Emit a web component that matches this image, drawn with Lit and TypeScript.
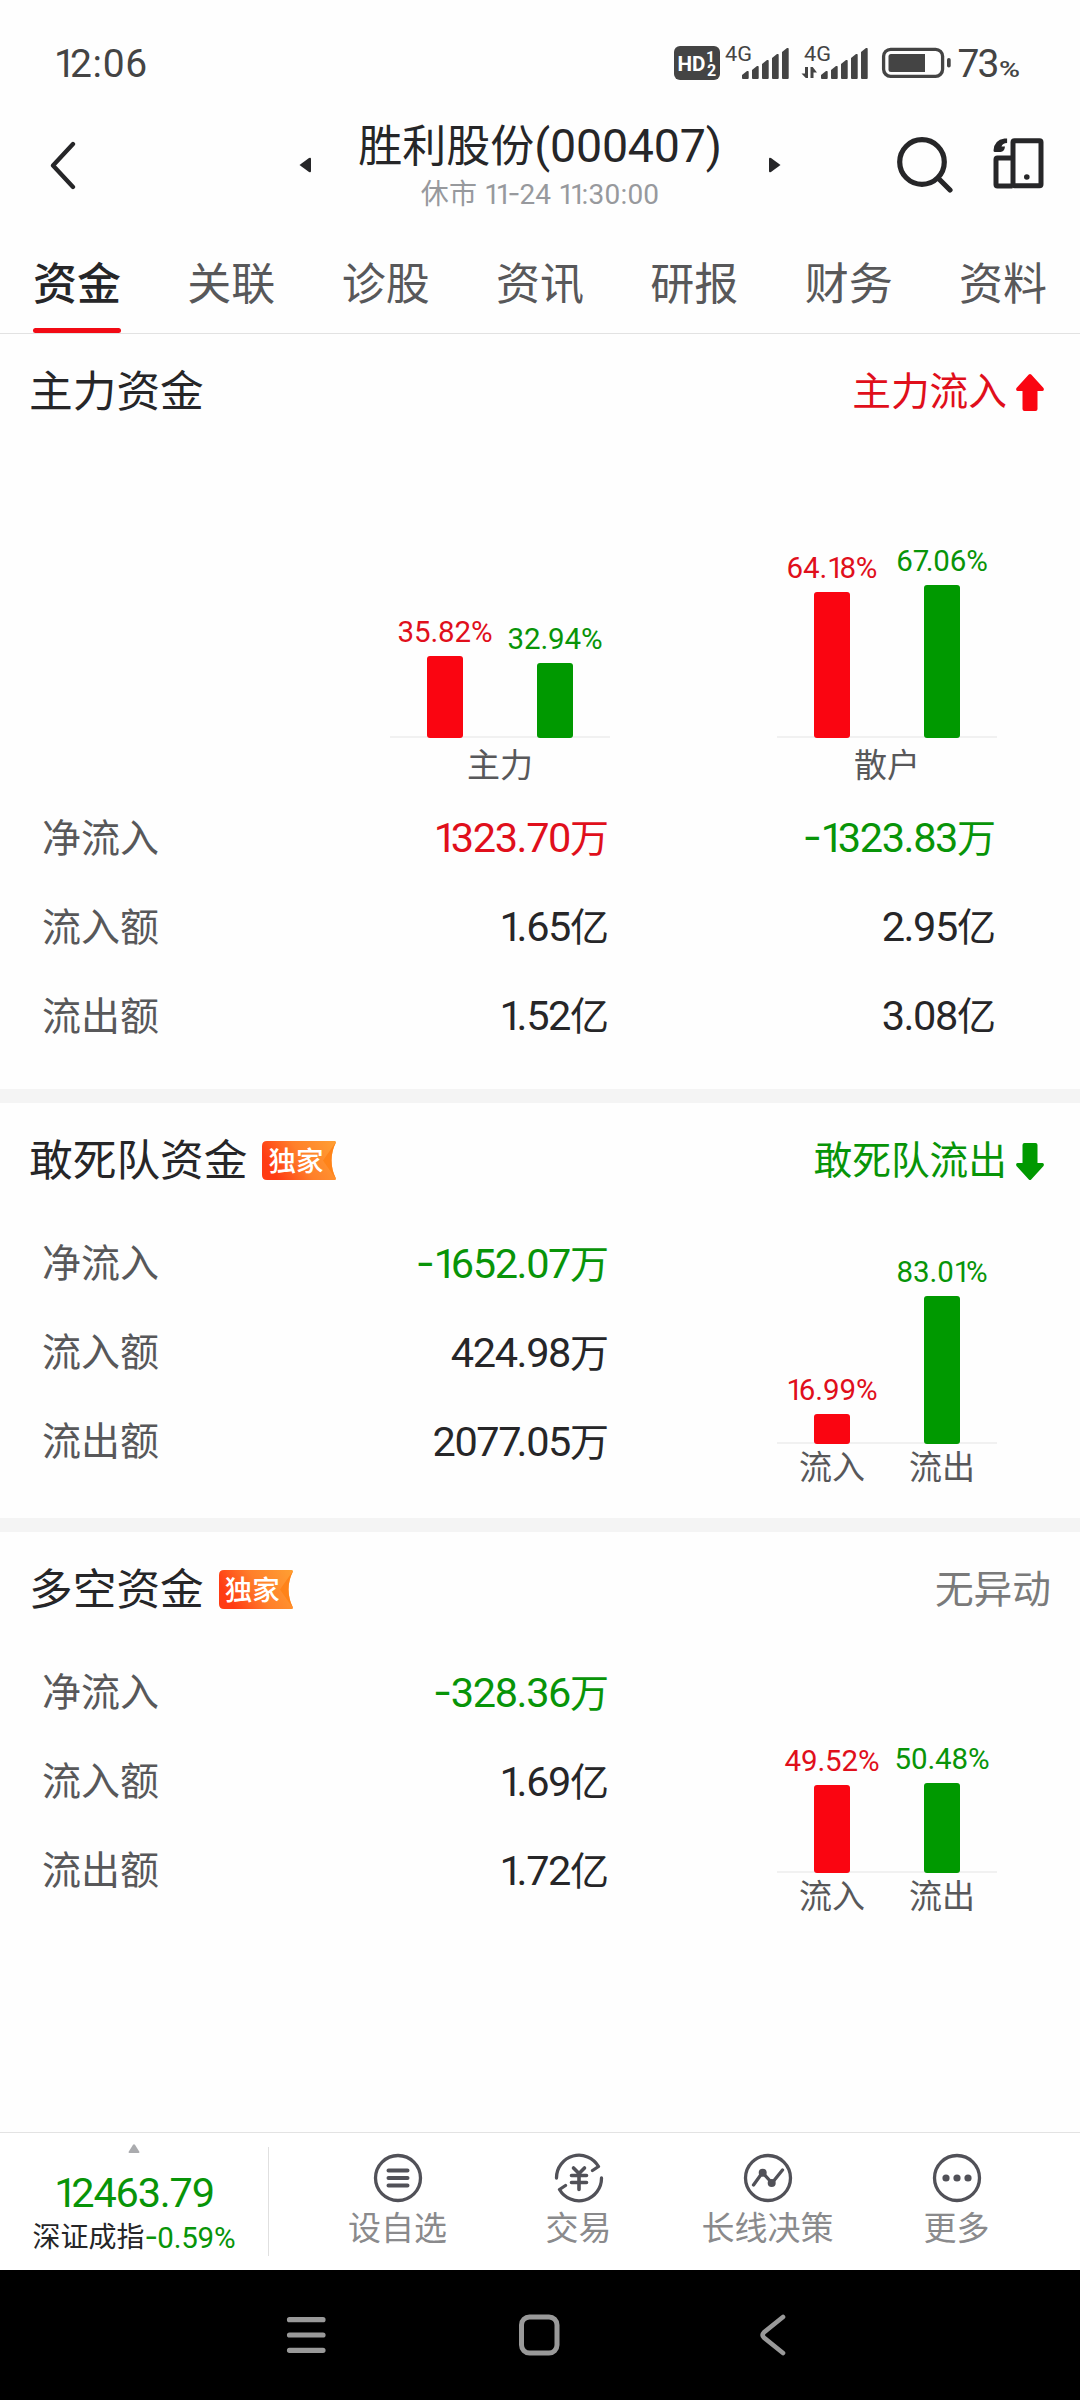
import { LitElement, html, svg, css, nothing } from "lit";
import { customElement, property } from "lit/decorators.js";

type Tone = "up" | "down" | "plain";
interface Bar { value: number; tone: Tone; label?: string; }
interface Amount { num: string; unit: string; tone: Tone; }
interface Row { label: string; amounts: Amount[]; }

const base = css`
  :host { display: block; font-family: Roboto, "Noto Sans CJK SC", sans-serif; }
  * { box-sizing: border-box; }
  svg { display: block; flex: none; }
  .one { letter-spacing: -0.150em; }
  .seven { letter-spacing: -0.120em; }
  .dash { font-family: Inter, sans-serif; letter-spacing: -0.030em; line-height: 0; vertical-align: 0.030em; }
  .up { color: #e00f1b; }
  .down { color: #089408; }
  .plain { color: #262628; }
`;

const classOf: Record<string, string> = { "1": "one", "7": "seven", "-": "dash" };

const numeral = (s: string) =>
  s.split(/(1|-|7(?=\.))/).filter((p) => p).map((p) => {
    const c = p.length === 1 && (p !== "7" || s.includes("7.")) ? classOf[p] : undefined;
    return c ? html`<span class=${c}>${p}</span>` : p;
  });

@customElement("status-bar")
class StatusBar extends LitElement {
  static styles = [base, css`
    .bar { display: flex; justify-content: space-between; align-items: center; height: 126px; padding: 0 56px 0 54px; color: #444; }
    .time { font-size: 39px; line-height: 46px; letter-spacing: 0.600px; padding-top: 2px; }
    .t { font-family: Roboto, sans-serif; fill: #444; }
    .w { fill: #fff; font-weight: 700; }
    .m { font-weight: 500; }
  `];
  signal(x: number) {
    const tops = [71, 66, 60, 54, 48];
    return tops.map((t, i) => {
      const l = x + i * 10;
      return svg`<path fill="#444" d="M${l} ${t + 4}L${l + 5} ${t}H${l + 6}Q${l + 6.7} ${t} ${l + 6.7} ${t + 1}V78Q${l + 6.7} 79 ${l + 5.7} 79H${l + 1}Q${l} 79 ${l} 78Z"/>`;
    });
  }
  render() {
    return html`<div class="bar">
      <span class="time">${numeral("12:06")}</span>
      <svg width="350" height="126" viewBox="674 0 350 126">
        <rect x="674" y="46" width="46" height="34" rx="6" fill="#444"/>
        <text class="t w" x="677.5" y="70.500" font-size="20" textLength="28" lengthAdjust="spacingAndGlyphs">HD</text>
        <text class="t w" x="706" y="61.5" font-size="15.5">1</text>
        <text class="t w" x="707" y="76" font-size="16">2</text>
        <text class="t" x="725" y="61" font-size="20" textLength="27" lengthAdjust="spacingAndGlyphs">4G</text>
        ${this.signal(742)}
        <text class="t" x="804" y="61" font-size="20" textLength="27" lengthAdjust="spacingAndGlyphs">4G</text>
        <path fill="#444" d="M805 67h3v11h-2.200L801.500 73.500H805zM810.500 78h3v-5.500h3.500L812.700 67h-2.200z"/>
        ${this.signal(821)}
        <rect x="883.600" y="49.300" width="59" height="27" rx="7" fill="none" stroke="#444" stroke-width="3.300"/>
        <path fill="#444" d="M891 54H925V72H891Q888.500 72 888.500 69.500V56.500Q888.500 54 891 54Z"/>
        <rect x="947" y="58" width="3.700" height="9.500" rx="1.800" fill="#444"/>
        <text class="t" x="957.500" y="77" font-size="39" textLength="42">73</text>
        <text class="t m" x="999" y="76.500" font-size="21.500" textLength="21" lengthAdjust="spacingAndGlyphs">%</text>
      </svg>
    </div>`;
  }
}

@customElement("stock-header")
class StockHeader extends LitElement {
  static styles = [base, css`
    .head { display: flex; align-items: center; height: 78px; padding: 0 36px 0 50px; }
    .mid { flex: 1; display: flex; justify-content: center; align-items: center; gap: 46px; padding-left: 107px; }
    .names { display: flex; flex-direction: column; align-items: center; width: 366px; height: 88px; }
    .title { font-size: 44px; line-height: 50px; color: #262628; white-space: nowrap; }
    .code { font-size: 46.500px; letter-spacing: -0.200px; }
    .sub { font-size: 28px; line-height: 34px; letter-spacing: 0.200px; color: #97999d; white-space: pre; margin-top: 6px; }
    .tools { display: flex; gap: 40px; }
  `];
  render() {
    return html`<div class="head">
      <svg width="27" height="50" viewBox="0 0 27 50"><path d="M23 4L3 25.500L23 47" fill="none" stroke="#262628" stroke-width="4.300" stroke-linecap="round" stroke-linejoin="round"/></svg>
      <div class="mid">
        <svg width="12" height="16" viewBox="0 0 12 16"><path d="M0.500 8L10 1Q12 0 12 2V14Q12 16 10 15Z" fill="#262628"/></svg>
        <div class="names">
          <div class="title">胜利股份<span class="code">(000407)</span></div>
          <div class="sub">休市 ${numeral("11-24")} ${numeral("11:30:00")}</div>
        </div>
        <svg width="12" height="16" viewBox="0 0 12 16"><path d="M11.500 8L2 1Q0 0 0 2V14Q0 16 2 15Z" fill="#262628"/></svg>
      </div>
      <div class="tools">
        <svg width="57" height="58" viewBox="896 136 57 58"><g fill="none" stroke="#262628" stroke-width="5.200" stroke-linecap="round"><circle cx="922" cy="162" r="22.300"/><path d="M938.500 178.500L950 190"/></g></svg>
        <svg width="51" height="54" viewBox="993.500 138 51 54">
          <g fill="none" stroke="#262628" stroke-width="5" stroke-linejoin="round">
            <rect x="1013.500" y="142.800" width="28" height="45" rx="1.500"/>
            <path d="M1013 160H998Q996.500 160 996.500 161.500V186.500Q996.500 188 998 188H1013"/>
          </g>
          <path fill="#262628" d="M1007.600 140.500V145Q1003 145 1002 148.500L1005.500 148.500Q1005 153.500 1001 154H995.500Q994 154 994 152.500Q994.500 142 1005 140.500Z"/>
          <circle cx="1027.300" cy="179" r="2.800" fill="#262628"/>
        </svg>
      </div>
    </div>`;
  }
}

@customElement("tab-strip")
class TabStrip extends LitElement {
  static styles = [base, css`
    .tabs { display: flex; justify-content: space-between; height: 130px; padding: 0 33px; border-bottom: 1px solid #e2e2e2; }
    .tab { display: flex; flex-direction: column; justify-content: flex-end; height: 129px; width: 88px; font-size: 44px; line-height: 60px; color: #58585a; white-space: nowrap; border-bottom: 5px solid transparent; padding-bottom: 13px; }
    .on { color: #262628; font-weight: 500; }
    .mark { height: 5px; border-radius: 3px; background: #f20a14; margin: 13px 0 -18px; }
  `];
  render() {
    const tabs = ["资金", "关联", "诊股", "资讯", "研报", "财务", "资料"];
    return html`<div class="tabs">${tabs.map((t, i) => html`<div class="tab ${i === 0 ? "on" : ""}"><span>${t}</span>${i === 0 ? html`<div class="mark"></div>` : nothing}</div>`)}</div>`;
  }
}

@customElement("bar-pair")
class BarPair extends LitElement {
  @property({ attribute: false }) bars: Bar[] = [];
  @property({ attribute: false }) scale = 1.780;
  @property() caption = "";
  static styles = [base, css`
    .plot { display: flex; width: 220px; background: linear-gradient(#f1f1f1, #f1f1f1) bottom / 100% 2px no-repeat; align-items: flex-end; }
    .col { width: 110px; display: flex; flex-direction: column; align-items: center; }
    .pct { font-size: 29.500px; line-height: 34px; letter-spacing: -0.100px; white-space: nowrap; padding-bottom: 7px; }
    .bar { width: 36px; border-radius: 3px; }
    .bar.up { background: #fa0511; }
    .bar.down { background: #009900; }
    .feet { display: flex; width: 220px; color: #58585a; font-size: 33px; line-height: 44px; }
    .foot { flex: 1; text-align: center; }
    .wide { padding-top: 6px; }
    .tight { padding-top: 1.500px; }
  `];
  render() {
    return html`
      <div class="plot">${this.bars.map((b) => html`<div class="col">
        <span class="pct ${b.tone}">${numeral(b.value.toFixed(2) + "%")}</span>
        <div class="bar ${b.tone}" style="height:${(b.value * this.scale).toFixed(1)}px"></div>
      </div>`)}</div>
      ${this.caption
        ? html`<div class="feet wide"><span class="foot">${this.caption}</span></div>`
        : html`<div class="feet tight">${this.bars.map((b) => html`<span class="foot">${b.label}</span>`)}</div>`}`;
  }
}

@customElement("section-head")
class SectionHead extends LitElement {
  @property() heading = "";
  @property() state = "";
  @property() trend = "";
  @property({ type: Boolean }) exclusive = false;
  static styles = [base, css`
    .head { display: flex; align-items: center; height: 114px; padding: 0 36px 0 29px; }
    .name { font-size: 43.700px; line-height: 60px; color: #262628; padding-top: 2px; }
    .badge { display: grid; margin-left: 15px; margin-top: 1px; width: 74px; height: 39px; }
    .badge > * { grid-area: 1 / 1; }
    .tag { font-size: 27.500px; line-height: 41px; color: #fff; font-weight: 500; padding-left: 6px; white-space: nowrap; }
    .state { margin-left: auto; display: flex; align-items: center; gap: 9px; font-size: 38.700px; line-height: 60px; padding-top: 2px; }
    .none { color: #7a7a7a; margin-right: -7px; }
  `];
  render() {
    const up = this.trend === "up";
    return html`<div class="head">
      <span class="name">${this.heading}</span>
      ${this.exclusive ? html`<span class="badge">
        <svg width="74" height="39" viewBox="0 0 74 39">
          <defs><linearGradient id="g" x1="0" x2="1" y1="0.300" y2="0"><stop offset="0" stop-color="#ff3c14"/><stop offset="0.450" stop-color="#ff7f2a"/><stop offset="1" stop-color="#ffa033"/></linearGradient></defs>
          <path fill="url(#g)" d="M5 0H73Q74 0 74 1.500Q69.500 10 69.500 19.500Q69.500 29 74 37.500Q74 39 73 39H5Q0 39 0 34V5Q0 0 5 0Z"/>
          <path fill="#ff8319" d="M74 1Q69.500 10 69.500 19.500Q69.500 29 74 38L61 19.500Z"/>
        </svg>
        <span class="tag">独家</span>
      </span>` : nothing}
      <span class="state ${this.trend || "none"}">${this.state}
        ${this.trend ? html`<svg width="28" height="37" viewBox="0 0 28 37"><path transform=${up ? "" : "rotate(180 14 18.5)"} fill=${up ? "#fa0511" : "#009900"} d="M12.800 0.600Q14 -0.400 15.200 0.600L27.500 14Q28.600 16.500 26.500 17H21.500V35Q21.500 37 19.500 37H8.500Q6.500 37 6.500 35V17H1.500Q-0.600 16.500 0.500 14Z"/></svg>` : nothing}
      </span>
    </div>`;
  }
}

@customElement("flow-rows")
class FlowRows extends LitElement {
  @property({ attribute: false }) rows: Row[] = [];
  static styles = [base, css`
    .row { display: grid; grid-template-columns: 200px 367px 387px; align-items: center; height: 89px; padding-left: 42px; line-height: 60px; }
    .label { font-size: 39px; color: #58585a; }
    .amount { text-align: right; white-space: nowrap; font-size: 41.500px; }
    .num { letter-spacing: -1.400px; }
    .unit { font-size: 39px; }
  `];
  render() {
    return this.rows.map((r) => html`<div class="row"><span class="label">${r.label}</span>${r.amounts.map((a) => html`<span class="amount ${a.tone}"><span class="num">${numeral(a.num)}</span><span class="unit">${a.unit}</span></span>`)}</div>`);
  }
}

@customElement("bottom-bar")
class BottomBar extends LitElement {
  static styles = [base, css`
    .bar { display: flex; height: 138px; border-top: 1px solid #e3e3e3; background: #fff; }
    .index { width: 269px; height: 109px; margin-top: 14px; border-right: 1px solid #e0e0e0; display: flex; flex-direction: column; align-items: center; }
    .value { font-size: 41.500px; line-height: 50px; letter-spacing: -1.200px; margin-top: 15px; }
    .name { display: flex; align-items: center; font-size: 28px; line-height: 34px; color: #262628; white-space: nowrap; margin-top: 3px; }
    .rate { font-size: 29.500px; letter-spacing: -0.200px; }
    .acts { display: grid; grid-template-columns: 181px 181px 197px 181px; padding-left: 38px; }
    .act { display: flex; flex-direction: column; align-items: center; padding-top: 20px; font-size: 33px; line-height: 44px; color: #8a8a8c; white-space: nowrap; }
    .act span { margin-top: 4px; }
    .rise { margin-top: -3px; }
  `];
  icon(body: unknown) {
    return html`<svg width="50" height="50" viewBox="-25 -25 50 50"><g fill="none" stroke="#515158" stroke-width="3.300" stroke-linecap="round" stroke-linejoin="round">${body}</g></svg>`;
  }
  render() {
    const ring = svg`<circle r="22.500"/>`;
    return html`<div class="bar">
      <div class="index">
        <svg class="rise" width="12" height="9" viewBox="0 0 12 9"><path d="M5 0.800Q6 -0.400 7 0.800L11.500 8Q11.500 9 10.500 9H1.500Q0.500 9 0.500 8Z" fill="#aaabae"/></svg>
        <div class="value down">${numeral("12463.79")}</div>
        <div class="name">深证成指<span class="rate down">${numeral("-0.59%")}</span></div>
      </div>
      <div class="acts">
        <div class="act">${this.icon(svg`${ring}<path stroke-width="4" d="M-9.500 -7.500H9.500M-9.500 0H9.500M-9.500 7.500H9.500"/>`)}<span>设自选</span></div>
        <div class="act">${this.icon(svg`<path d="M-22.500 0A22.500 22.500 0 0 1 19.500 -11.500L13.500 -7.500M22.500 0A22.500 22.500 0 0 1 -19.500 11.500L-13.500 7.500"/><path stroke-width="3.600" d="M-5.500 -10L0 -4.500L5.500 -10M-7.500 -2.500H7.500M-7.500 4.500H7.500M0 -4V11.500"/>`)}<span>交易</span></div>
        <div class="act">${this.icon(svg`${ring}<path d="M-14.500 7L-5.500 -5.500L4 5L14.500 -8"/><g fill="#515158" stroke="none"><circle cx="-5.300" cy="-5.200" r="4"/><circle cx="3.700" cy="5" r="4"/></g>`)}<span>长线决策</span></div>
        <div class="act">${this.icon(svg`${ring}<g fill="#515158" stroke="none"><circle cx="-11" r="3.600"/><circle r="3.600"/><circle cx="11" r="3.600"/></g>`)}<span>更多</span></div>
      </div>
    </div>`;
  }
}

@customElement("system-nav")
class SystemNav extends LitElement {
  static styles = [base, css`
    .nav { display: flex; align-items: center; gap: 192px; height: 130px; padding-left: 286px; background: #000; }
    .last { margin-left: 7px; }
  `];
  render() {
    return html`<div class="nav">
      <svg width="40" height="44" viewBox="0 0 40 44"><path d="M3.500 6.700H37M3.500 22H37M3.500 37.300H37" stroke="#999" stroke-width="5.200" stroke-linecap="round"/></svg>
      <svg width="42" height="44" viewBox="0 0 42 44"><rect x="3.500" y="4" width="35.500" height="36" rx="8" fill="none" stroke="#999" stroke-width="5"/></svg>
      <svg class="last" width="28" height="44" viewBox="0 0 28 44"><path d="M24 4L4.800 19.500Q2.500 22 4.800 24.500L24 40" fill="none" stroke="#999" stroke-width="4.600" stroke-linecap="round"/></svg>
    </div>`;
  }
}

@customElement("app-root")
class AppRoot extends LitElement {
  static styles = [base, css`
    .page { display: flex; flex-direction: column; width: 1080px; height: 2400px; background: #fefefe; overflow: hidden; }
    .band { height: 14px; background: #f4f4f4; flex: none; }
    .charts { display: flex; justify-content: flex-end; align-items: flex-end; gap: 167px; height: 346px; padding: 0 83px 6px 0; }
    .main { padding-bottom: 28px; }
    .split { height: 415px; }
    .body { display: grid; padding-top: 2.500px; }
    .body > * { grid-area: 1 / 1; }
    .side { justify-self: end; align-self: end; padding-right: 83px; margin-bottom: -3px; }
    .grow { flex: 1; }
  `];
  render() {
    const main: Row[] = [
      { label: "净流入", amounts: [{ num: "1323.70", unit: "万", tone: "up" }, { num: "-1323.83", unit: "万", tone: "down" }] },
      { label: "流入额", amounts: [{ num: "1.65", unit: "亿", tone: "plain" }, { num: "2.95", unit: "亿", tone: "plain" }] },
      { label: "流出额", amounts: [{ num: "1.52", unit: "亿", tone: "plain" }, { num: "3.08", unit: "亿", tone: "plain" }] },
    ];
    const squad: Row[] = [
      { label: "净流入", amounts: [{ num: "-1652.07", unit: "万", tone: "down" }] },
      { label: "流入额", amounts: [{ num: "424.98", unit: "万", tone: "plain" }] },
      { label: "流出额", amounts: [{ num: "2077.05", unit: "万", tone: "plain" }] },
    ];
    const longShort: Row[] = [
      { label: "净流入", amounts: [{ num: "-328.36", unit: "万", tone: "down" }] },
      { label: "流入额", amounts: [{ num: "1.69", unit: "亿", tone: "plain" }] },
      { label: "流出额", amounts: [{ num: "1.72", unit: "亿", tone: "plain" }] },
    ];
    const pair = (a: number, b: number, labels = false): Bar[] => [
      { value: a, tone: "up", label: labels ? "流入" : undefined },
      { value: b, tone: "down", label: labels ? "流出" : undefined },
    ];
    return html`<div class="page">
      <status-bar></status-bar>
      <stock-header></stock-header>
      <tab-strip></tab-strip>
      <section class="main">
        <section-head heading="主力资金" state="主力流入" trend="up"></section-head>
        <div class="charts">
          <bar-pair .bars=${pair(35.82, 32.94)} .scale=${2.277} caption="主力"></bar-pair>
          <bar-pair .bars=${pair(64.18, 67.06)} .scale=${2.277} caption="散户"></bar-pair>
        </div>
        <flow-rows .rows=${main}></flow-rows>
      </section>
      <div class="band"></div>
      <section class="split">
        <section-head heading="敢死队资金" state="敢死队流出" trend="down" exclusive></section-head>
        <div class="body">
          <flow-rows .rows=${squad}></flow-rows>
          <bar-pair class="side" .bars=${pair(16.99, 83.01, true)}></bar-pair>
        </div>
      </section>
      <div class="band"></div>
      <section class="split">
        <section-head heading="多空资金" state="无异动" exclusive></section-head>
        <div class="body">
          <flow-rows .rows=${longShort}></flow-rows>
          <bar-pair class="side" .bars=${pair(49.52, 50.48, true)}></bar-pair>
        </div>
      </section>
      <div class="grow"></div>
      <bottom-bar></bottom-bar>
      <system-nav></system-nav>
    </div>`;
  }
}
